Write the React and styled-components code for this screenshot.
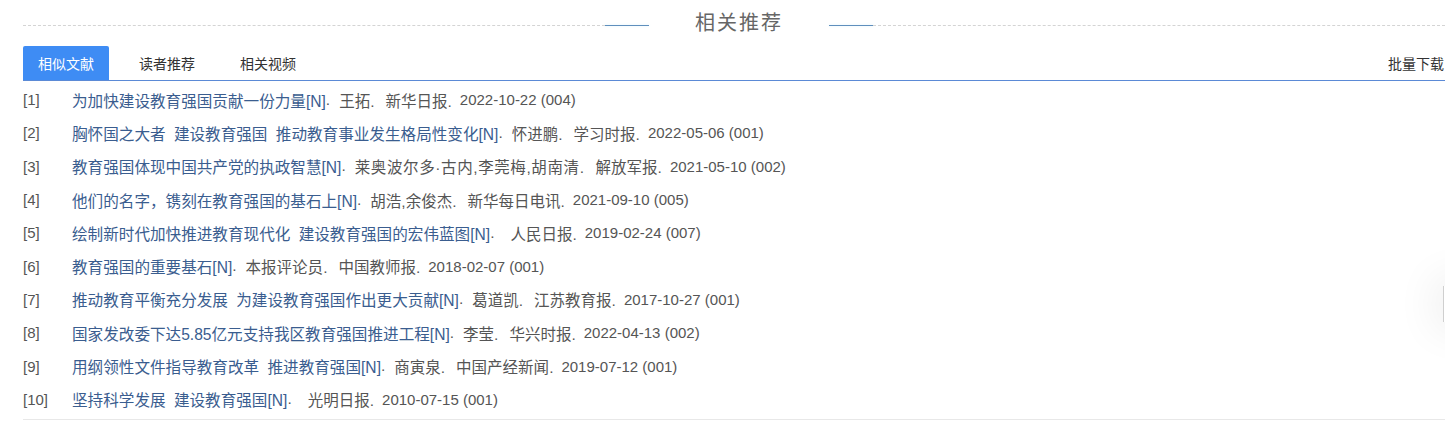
import React from "react";
import styled, { createGlobalStyle } from "styled-components";

const GlobalStyle = createGlobalStyle`
  html, body {
    margin: 0;
    padding: 0;
    background: #fff;
    overflow: hidden;
  }
  body {
    font-family: "Liberation Sans", Arial, "Noto Sans CJK SC", sans-serif;
    color: #555;
  }
`;

const Wrapper = styled.div`
  width: 1422px;
  margin-left: 23px;
`;

const Header = styled.div`
  display: flex;
  align-items: center;
  height: 46px;
  margin-right: -10px;
`;

const Dashed = styled.div`
  flex: 1;
  height: 0;
  border-top: 1px dashed #d4d4d4;
  margin-top: 4px;
`;

const Accent = styled.div`
  width: 44px;
  height: 1px;
  margin-top: 4px;
  background: #5f8fbd;
  box-shadow: 0 0 3px #d8eef8;
`;

const Title = styled.h2`
  margin: 0;
  padding: 0 46px;
  font-size: 20px;
  font-weight: normal;
  letter-spacing: 2px;
  color: #666;
  line-height: 1;
`;

const TabBar = styled.div`
  display: flex;
  align-items: stretch;
  height: 34px;
  border-bottom: 1px solid #5b8ad6;
`;

const Tab = styled.div`
  display: flex;
  align-items: center;
  padding: 0 15px;
  margin-right: 15px;
  font-size: 14px;
  color: ${(p) => (p.active ? "#fff" : "#333")};
  background: ${(p) => (p.active ? "#3e8cf4" : "transparent")};
  border-radius: 2px 2px 0 0;
  cursor: pointer;
`;

const Download = styled.div`
  margin-left: auto;
  display: flex;
  align-items: center;
  padding-right: 1px;
  font-size: 14px;
  color: #333;
  white-space: nowrap;
  cursor: pointer;
`;

const List = styled.ul`
  list-style: none;
  margin: 0;
  padding: 2px 0 3px;
  border-bottom: 1px solid #e8e8e8;
`;

const Row = styled.li`
  display: flex;
  align-items: center;
  height: 33.3px;
  font-size: 15.5px;
  color: #555;
  white-space: nowrap;
`;

const Index = styled.span`
  width: 49px;
  flex-shrink: 0;
  font-size: 15px;
  color: #555;
`;

const Link = styled.a`
  font-size: 15.6px;
  word-spacing: 4px;
  color: #3a5d8f;
  text-decoration: none;
  cursor: pointer;
`;

const Part = styled.span`
  margin-left: ${(p) => p.$gap}px;
  font-size: ${(p) => (p.$date ? "15px" : "15.5px")};
  letter-spacing: ${(p) => (p.$wide ? "0.6px" : "0")};
`;

const SideWidget = styled.div`
  position: fixed;
  left: 1443px;
  top: 286px;
  width: 40px;
  height: 36px;
  background: #fff;
  border-left: 1px solid #cfcfcf;
  box-shadow: 0 0 40px 10px rgba(0, 0, 0, 0.06);
`;

const records = [
  { title: "为加快建设教育强国贡献一份力量", author: "王拓", source: "新华日报", date: "2022-10-22 (004)" },
  { title: "胸怀国之大者 建设教育强国 推动教育事业发生格局性变化", author: "怀进鹏", source: "学习时报", date: "2022-05-06 (001)" },
  { title: "教育强国体现中国共产党的执政智慧", author: "莱奥波尔多·古内,李莞梅,胡南清", source: "解放军报", date: "2021-05-10 (002)" },
  { title: "他们的名字，镌刻在教育强国的基石上", author: "胡浩,余俊杰", source: "新华每日电讯", date: "2021-09-10 (005)" },
  { title: "绘制新时代加快推进教育现代化 建设教育强国的宏伟蓝图", author: "", source: "人民日报", date: "2019-02-24 (007)" },
  { title: "教育强国的重要基石", author: "本报评论员", source: "中国教师报", date: "2018-02-07 (001)" },
  { title: "推动教育平衡充分发展 为建设教育强国作出更大贡献", author: "葛道凯", source: "江苏教育报", date: "2017-10-27 (001)" },
  { title: "国家发改委下达5.85亿元支持我区教育强国推进工程", author: "李莹", source: "华兴时报", date: "2022-04-13 (002)" },
  { title: "用纲领性文件指导教育改革 推进教育强国", author: "商寅泉", source: "中国产经新闻", date: "2019-07-12 (001)" },
  { title: "坚持科学发展 建设教育强国", author: "", source: "光明日报", date: "2010-07-15 (001)" },
];

const tabs = ["相似文献", "读者推荐", "相关视频"];

const App = () => {
  return (
    <>
      <GlobalStyle />
      <Wrapper>
        <Header>
          <Dashed />
          <Accent />
          <Title>相关推荐</Title>
          <Accent />
          <Dashed />
        </Header>
        <TabBar>
          {tabs.map((t, i) => (
            <Tab key={t} active={i === 0}>{t}</Tab>
          ))}
          <Download>批量下载</Download>
        </TabBar>
        <List>
          {records.map((r, i) => (
            <Row key={i}>
              <Index>[{i + 1}]</Index>
              <Link>{r.title}[N]</Link>
              <span>.</span>
              {r.author && (
                <Part $gap={9} $wide={r.author.length > 10}>{r.author}.</Part>
              )}
              <Part $gap={r.author ? 11 : 16}>{r.source}.</Part>
              <Part $gap={8} $date>{r.date}</Part>
            </Row>
          ))}
        </List>
      </Wrapper>
      <SideWidget />
    </>
  );
};

export default App;
